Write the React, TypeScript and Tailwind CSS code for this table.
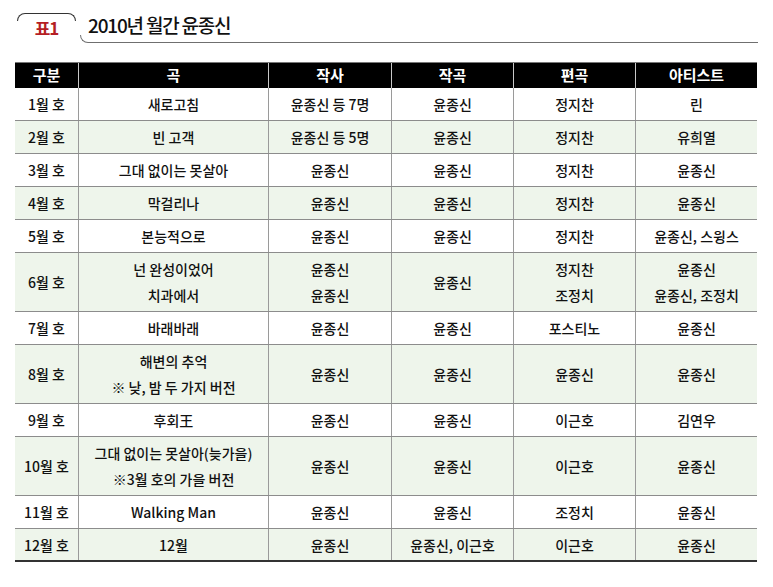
import React from 'react'

interface Row {
  month: string
  song: string[]
  lyric: string[]
  comp: string
  arr: string[]
  artist: string[]
  tall?: boolean
}

const rows: Row[] = [
  { month: '1월 호', song: ['새로고침'], lyric: ['윤종신 등 7명'], comp: '윤종신', arr: ['정지찬'], artist: ['린'] },
  { month: '2월 호', song: ['빈 고객'], lyric: ['윤종신 등 5명'], comp: '윤종신', arr: ['정지찬'], artist: ['유희열'] },
  { month: '3월 호', song: ['그대 없이는 못살아'], lyric: ['윤종신'], comp: '윤종신', arr: ['정지찬'], artist: ['윤종신'] },
  { month: '4월 호', song: ['막걸리나'], lyric: ['윤종신'], comp: '윤종신', arr: ['정지찬'], artist: ['윤종신'] },
  { month: '5월 호', song: ['본능적으로'], lyric: ['윤종신'], comp: '윤종신', arr: ['정지찬'], artist: ['윤종신, 스윙스'] },
  {
    month: '6월 호',
    song: ['넌 완성이었어', '치과에서'],
    lyric: ['윤종신', '윤종신'],
    comp: '윤종신',
    arr: ['정지찬', '조정치'],
    artist: ['윤종신', '윤종신, 조정치'],
    tall: true,
  },
  { month: '7월 호', song: ['바래바래'], lyric: ['윤종신'], comp: '윤종신', arr: ['포스티노'], artist: ['윤종신'] },
  {
    month: '8월 호',
    song: ['해변의 추억', '※ 낮, 밤 두 가지 버전'],
    lyric: ['윤종신'],
    comp: '윤종신',
    arr: ['윤종신'],
    artist: ['윤종신'],
    tall: true,
  },
  { month: '9월 호', song: ['후회王'], lyric: ['윤종신'], comp: '윤종신', arr: ['이근호'], artist: ['김연우'] },
  {
    month: '10월 호',
    song: ['그대 없이는 못살아(늦가을)', '※3월 호의 가을 버전'],
    lyric: ['윤종신'],
    comp: '윤종신',
    arr: ['이근호'],
    artist: ['윤종신'],
    tall: true,
  },
  { month: '11월 호', song: ['Walking Man'], lyric: ['윤종신'], comp: '윤종신', arr: ['조정치'], artist: ['윤종신'] },
  { month: '12월 호', song: ['12월'], lyric: ['윤종신'], comp: '윤종신, 이근호', arr: ['이근호'], artist: ['윤종신'] },
]

const headers = ['구분', '곡', '작사', '작곡', '편곡', '아티스트']

const Cell = ({ lines, first }: { lines: string[]; first?: boolean }) => (
  <div
    className={
      'flex flex-col items-center justify-center leading-[26px] ' +
      (first ? '' : 'border-l border-[#9a9a9a]')
    }
  >
    {lines.map((l, i) => (
      <span key={i} className="whitespace-nowrap">
        {l}
      </span>
    ))}
  </div>
)

export default function App() {
  return (
    <div
      className="w-[773px] h-[587px] bg-white px-[15px] pt-[13px] text-[#111]"
      style={{ fontFamily: '"Noto Sans CJK KR", "Noto Sans", sans-serif' }}
    >
      {/* title */}
      <div className="flex h-[30px]">
        <div className="w-[59px] ml-[2px] flex flex-col">
          <div className="h-[8px] border-t border-x border-[#333] rounded-t-[8px]" />
          <div className="-mt-[3px] text-center text-[17px] font-bold leading-[20px] tracking-[-1px] text-[#b51e24]">
            표1
          </div>
        </div>
        <div className="flex-1 ml-[4px] flex flex-col">
          <div className="pl-[8px] text-[19px] font-medium leading-[22px] tracking-[-1.2px] text-[#111] mt-[1px]">
            2010년 월간 윤종신
          </div>
          <div className="h-[8px] border-l border-b border-[#6f6f6f] rounded-bl-[8px] -mt-[1px]" />
        </div>
      </div>

      {/* table */}
      <div className="mt-[19px] w-[742px] text-[14px] font-medium">
        <div className="grid grid-cols-[63px_190px_123px_122px_122px_122px] h-[26px] bg-black text-white font-bold text-[15px] border-t border-[#777]">
          {headers.map((h, i) => (
            <div
              key={h}
              className={
                'flex items-center justify-center ' + (i === 0 ? '' : 'border-l border-[#c8c8c8]')
              }
            >
              {h}
            </div>
          ))}
        </div>
        {rows.map((r, i) => (
          <div
            key={r.month}
            className={
              'grid grid-cols-[63px_190px_123px_122px_122px_122px] ' +
              (r.tall ? 'h-[59px] ' : 'h-[33px] ') +
              (i % 2 === 1 ? 'bg-[#eef5eb] ' : 'bg-white ') +
              (i === rows.length - 1 ? 'border-b-2 border-[#333]' : 'border-b border-[#8c8c8c]')
            }
          >
            <Cell lines={[r.month]} first />
            <Cell lines={r.song} />
            <Cell lines={r.lyric} />
            <Cell lines={[r.comp]} />
            <Cell lines={r.arr} />
            <Cell lines={r.artist} />
          </div>
        ))}
      </div>
    </div>
  )
}
